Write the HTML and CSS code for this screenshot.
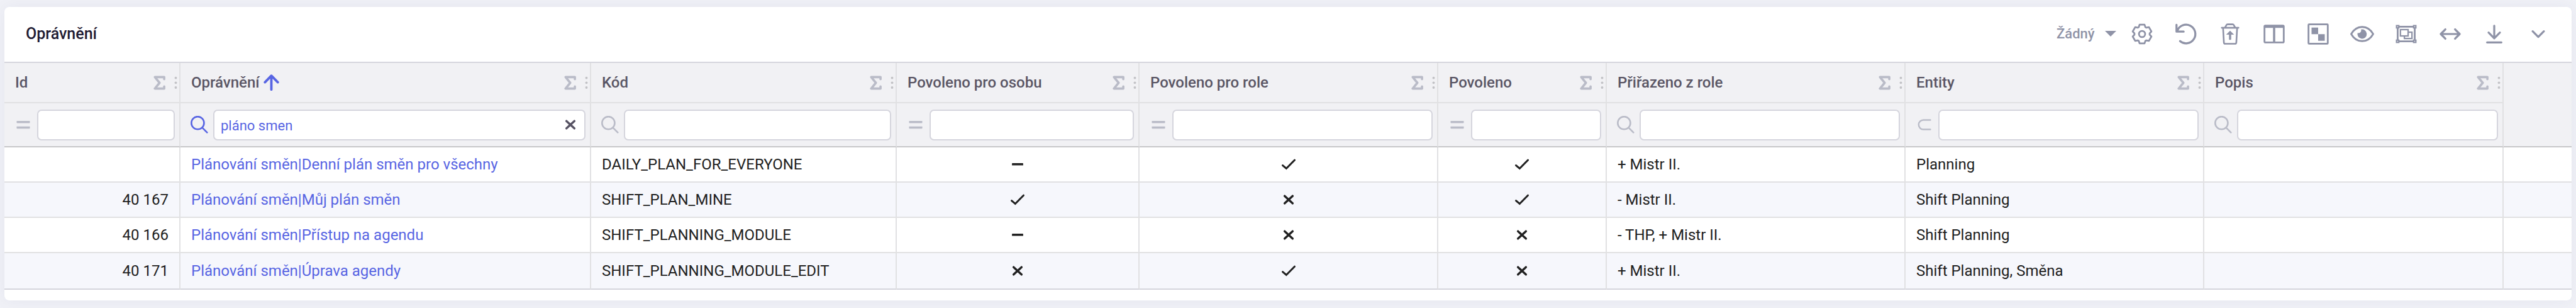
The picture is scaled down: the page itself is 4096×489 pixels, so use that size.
FILE: index.html
```html
<!DOCTYPE html>
<html lang="cs">
<head>
<meta charset="utf-8">
<meta name="viewport" content="width=device-width, initial-scale=1">
<title>Oprávnění</title>
<link rel="stylesheet" href="styles.css">
</head>
<body>
<svg class="sprite" aria-hidden="true">
  <symbol id="i-sigma" viewBox="-11 -13 22 26"><path d="M8.8 -6.8V-10.6H-8.4L0.2 0L-8.4 10.6H8.8V6.8" fill="none" stroke="currentColor" stroke-width="4.2" stroke-linecap="round" stroke-linejoin="round"/></symbol>
  <symbol id="i-dots" viewBox="0 0 6 26"><circle cx="3" cy="3.6" r="2.3"/><circle cx="3" cy="12.8" r="2.3"/><circle cx="3" cy="22" r="2.3"/></symbol>
  <symbol id="i-search" viewBox="0 0 32 32"><g fill="none" stroke="currentColor" stroke-width="3" stroke-linecap="round"><circle cx="13" cy="12.8" r="11.5"/><path d="M21.5 21.5L30 30.2"/></g></symbol>
  <symbol id="i-equals" viewBox="0 0 32 32"><rect x="4" y="9" width="24" height="4" rx="0.8"/><rect x="4" y="19" width="24" height="4" rx="0.8"/></symbol>
  <symbol id="i-subset" viewBox="0 0 32 32"><path d="M26.7 7.4H14A8.5 8.6 0 0 0 14 24.6H26.7" fill="none" stroke="currentColor" stroke-width="2.8" stroke-linecap="round"/></symbol>
  <symbol id="i-check" viewBox="-16 -16 32 32"><path d="M-10.8 1.8L-4.2 7.4L10.8 -7.8" fill="none" stroke="currentColor" stroke-width="3.4" stroke-linecap="round"/></symbol>
  <symbol id="i-cross" viewBox="-16 -16 32 32"><path d="M-7.2 -6.6L7.2 6.6M7.2 -6.6L-7.2 6.6" fill="none" stroke="currentColor" stroke-width="4" stroke-linecap="round"/></symbol>
  <symbol id="i-minus" viewBox="-16 -16 32 32"><rect x="-10.2" y="-2.2" width="20.4" height="4" rx="0.5"/></symbol>
</svg>

<main class="panel">
  <header class="panel-head">
    <h1 class="panel-title">Oprávnění</h1>
    <div class="toolbar">
      <div class="preset">
        <select class="preset-select" aria-label="Filtr"><option>Žádný</option></select>
        <svg class="preset-caret" viewBox="0 0 20 10" aria-hidden="true"><path d="M0 0H20L10 10Z"/></svg>
      </div>
      <button class="tool" type="button" aria-label="Nastavení"><svg class="tool-icon" viewBox="-40 -40 80 80"><g stroke-width="3.2"><circle r="5.6"/><path d="M-6 -12.6L-4.5 -17H4.5L6 -12.6L7.9 -11.5L12.5 -12.4L17 -4.6L13.8 -1.2V1.2L17 4.6L12.5 12.4L7.9 11.5L6 12.6L4.5 17H-4.5L-6 12.6L-7.9 11.5L-12.5 12.4L-17 4.6L-13.8 1.2V-1.2L-17 -4.6L-12.5 -12.4L-7.9 -11.5Z"/></g></svg></button>
      <button class="tool" type="button" aria-label="Obnovit"><svg class="tool-icon" viewBox="-40 -40 80 80"><path d="M-17.4 -16.8V-4.4H-4.4M-16 -5.5A16.9 16.9 0 1 1 -11 12.9"/></svg></button>
      <button class="tool" type="button" aria-label="Obnovit z koše"><svg class="tool-icon" viewBox="-40 -40 80 80"><g stroke-width="3"><path d="M-15.2 -11.3H15.2M-9 -12L-6.4 -16.6Q-6 -17.6 -4.6 -17.6H4.6Q6 -17.6 6.4 -16.6L9 -12M-12.8 -11L-11.3 15.2Q-11.1 17.7 -9 17.7H9Q11.1 17.7 11.3 15.2L12.8 -11"/></g><path class="solid" d="M0 -6L7.2 1.2H2V9.5Q2 10.5 1 10.5H-1Q-2 10.5 -2 9.5V1.2H-7.2Z"/></svg></button>
      <button class="tool" type="button" aria-label="Sloupce"><svg class="tool-icon" viewBox="-40 -40 80 80"><rect x="-17.5" y="-15.2" width="35" height="30.4" rx="1.6" stroke-width="3.2"/><path d="M-17 -13.2H17M0 -12V15" stroke-width="4" stroke-linecap="butt"/></svg></button>
      <button class="tool" type="button" aria-label="Seskupení"><svg class="tool-icon" viewBox="-40 -40 80 80"><rect x="-17.5" y="-17.5" width="35" height="35" rx="1" stroke-width="3.2"/><path class="solid" d="M-12 -11.6H0V0.2H12V12.2H0V0.2H-12Z"/></svg></button>
      <button class="tool" type="button" aria-label="Zobrazení"><svg class="tool-icon" viewBox="-40 -40 80 80"><path d="M-20 0C-15.5 -8 -8 -12.9 0 -12.9S15.5 -8 20 0C15.5 8 8 12.9 0 12.9S-15.5 8 -20 0Z" stroke-width="3.3"/><path class="solid" d="M-2.2 -8.2A8.5 8.5 0 1 1 -8.3 -2.3C-4.6 0 -0.5 -4.5 -2.2 -8.2Z"/></svg></button>
      <button class="tool" type="button" aria-label="Výběr"><svg class="tool-icon" viewBox="-40 -40 80 80"><g stroke-width="2.6" stroke-linejoin="miter"><rect x="-17.5" y="-15.2" width="4" height="4"/><rect x="13.5" y="-15.2" width="4" height="4"/><rect x="-17.5" y="11.2" width="4" height="4"/><rect x="13.5" y="11.2" width="4" height="4"/><path d="M-12.2 -13.2H12.2M-12.2 13.2H12.2M-15.5 -10V10M15.5 -10V10" stroke-width="3.2"/><rect x="-10.5" y="-8" width="14" height="11.5"/><path d="M4 -3.2H10.5V8.2H-3.3V4"/></g></svg></button>
      <button class="tool" type="button" aria-label="Šířka sloupců"><svg class="tool-icon" viewBox="-40 -40 80 80"><path d="M-17 0H17M-8.8 -8.5L-17.2 0L-8.8 8.5M8.8 -8.5L17.2 0L8.8 8.5"/></svg></button>
      <button class="tool" type="button" aria-label="Stáhnout"><svg class="tool-icon" viewBox="-40 -40 80 80"><path d="M0 -15V7.5M-10.3 -2.6L0 7.8L10.3 -2.6M-13 15.2H13"/></svg></button>
      <button class="tool" type="button" aria-label="Sbalit"><svg class="tool-icon" viewBox="-40 -40 80 80"><path d="M-10.2 -5L0 5.2L10.2 -5"/></svg></button>
    </div>
  </header>

  <table class="grid">
    <colgroup>
      <col class="c-id"><col class="c-name"><col class="c-code"><col class="c-person"><col class="c-role"><col class="c-allowed"><col class="c-from"><col class="c-entity"><col class="c-note"><col>
    </colgroup>
    <thead>
      <tr class="heads">
        <th scope="col"><div class="head"><span id="h-id">Id</span><button class="sum" type="button" aria-label="Součet"><svg><use href="#i-sigma"/></svg></button><svg class="dots"><use href="#i-dots"/></svg></div></th>
        <th scope="col" aria-sort="ascending"><div class="head"><span id="h-name">Oprávnění</span><svg class="sort" viewBox="0 0 28 30"><path d="M14 28V3M2.2 14.5L14 2.5L25.8 14.5"/></svg><button class="sum" type="button" aria-label="Součet"><svg><use href="#i-sigma"/></svg></button><svg class="dots"><use href="#i-dots"/></svg></div></th>
        <th scope="col"><div class="head"><span id="h-code">Kód</span><button class="sum" type="button" aria-label="Součet"><svg><use href="#i-sigma"/></svg></button><svg class="dots"><use href="#i-dots"/></svg></div></th>
        <th scope="col"><div class="head"><span id="h-person">Povoleno pro osobu</span><button class="sum" type="button" aria-label="Součet"><svg><use href="#i-sigma"/></svg></button><svg class="dots"><use href="#i-dots"/></svg></div></th>
        <th scope="col"><div class="head"><span id="h-role">Povoleno pro role</span><button class="sum" type="button" aria-label="Součet"><svg><use href="#i-sigma"/></svg></button><svg class="dots"><use href="#i-dots"/></svg></div></th>
        <th scope="col"><div class="head"><span id="h-allowed">Povoleno</span><button class="sum" type="button" aria-label="Součet"><svg><use href="#i-sigma"/></svg></button><svg class="dots"><use href="#i-dots"/></svg></div></th>
        <th scope="col"><div class="head"><span id="h-from">Přiřazeno z role</span><button class="sum" type="button" aria-label="Součet"><svg><use href="#i-sigma"/></svg></button><svg class="dots"><use href="#i-dots"/></svg></div></th>
        <th scope="col"><div class="head"><span id="h-entity">Entity</span><button class="sum" type="button" aria-label="Součet"><svg><use href="#i-sigma"/></svg></button><svg class="dots"><use href="#i-dots"/></svg></div></th>
        <th scope="col"><div class="head"><span id="h-note">Popis</span><button class="sum" type="button" aria-label="Součet"><svg><use href="#i-sigma"/></svg></button><svg class="dots"><use href="#i-dots"/></svg></div></th>
        <td class="rest" rowspan="2"></td>
      </tr>
      <tr class="filters">
        <td><div class="filter"><svg class="op"><use href="#i-equals"/></svg><input class="box" type="text" aria-labelledby="h-id"></div></td>
        <td><div class="filter active"><svg class="op"><use href="#i-search"/></svg><input class="box" type="text" value="pláno smen" aria-labelledby="h-name"><button class="clear" type="button" aria-label="Vymazat"><svg class="mark"><use href="#i-cross"/></svg></button></div></td>
        <td><div class="filter"><svg class="op"><use href="#i-search"/></svg><input class="box" type="text" aria-labelledby="h-code"></div></td>
        <td><div class="filter"><svg class="op"><use href="#i-equals"/></svg><input class="box" type="text" aria-labelledby="h-person"></div></td>
        <td><div class="filter"><svg class="op"><use href="#i-equals"/></svg><input class="box" type="text" aria-labelledby="h-role"></div></td>
        <td><div class="filter"><svg class="op"><use href="#i-equals"/></svg><input class="box" type="text" aria-labelledby="h-allowed"></div></td>
        <td><div class="filter"><svg class="op"><use href="#i-search"/></svg><input class="box" type="text" aria-labelledby="h-from"></div></td>
        <td><div class="filter"><svg class="op"><use href="#i-subset"/></svg><input class="box" type="text" aria-labelledby="h-entity"></div></td>
        <td><div class="filter"><svg class="op"><use href="#i-search"/></svg><input class="box" type="text" aria-labelledby="h-note"></div></td>
      </tr>
    </thead>
    <tbody>
      <tr>
        <td class="num"></td>
        <td><a class="link" href="#">Plánování směn|Denní plán směn pro všechny</a></td>
        <td>DAILY_PLAN_FOR_EVERYONE</td>
        <td class="flag"><svg class="mark" role="img" aria-label="Neurčeno"><use href="#i-minus"/></svg></td>
        <td class="flag"><svg class="mark" role="img" aria-label="Ano"><use href="#i-check"/></svg></td>
        <td class="flag"><svg class="mark" role="img" aria-label="Ano"><use href="#i-check"/></svg></td>
        <td>+ Mistr II.</td>
        <td>Planning</td>
        <td></td>
        <td></td>
      </tr>
      <tr>
        <td class="num">40 167</td>
        <td><a class="link" href="#">Plánování směn|Můj plán směn</a></td>
        <td>SHIFT_PLAN_MINE</td>
        <td class="flag"><svg class="mark" role="img" aria-label="Ano"><use href="#i-check"/></svg></td>
        <td class="flag"><svg class="mark" role="img" aria-label="Ne"><use href="#i-cross"/></svg></td>
        <td class="flag"><svg class="mark" role="img" aria-label="Ano"><use href="#i-check"/></svg></td>
        <td>- Mistr II.</td>
        <td>Shift Planning</td>
        <td></td>
        <td></td>
      </tr>
      <tr>
        <td class="num">40 166</td>
        <td><a class="link" href="#">Plánování směn|Přístup na agendu</a></td>
        <td>SHIFT_PLANNING_MODULE</td>
        <td class="flag"><svg class="mark" role="img" aria-label="Neurčeno"><use href="#i-minus"/></svg></td>
        <td class="flag"><svg class="mark" role="img" aria-label="Ne"><use href="#i-cross"/></svg></td>
        <td class="flag"><svg class="mark" role="img" aria-label="Ne"><use href="#i-cross"/></svg></td>
        <td>- THP, + Mistr II.</td>
        <td>Shift Planning</td>
        <td></td>
        <td></td>
      </tr>
      <tr>
        <td class="num">40 171</td>
        <td><a class="link" href="#">Plánování směn|Úprava agendy</a></td>
        <td>SHIFT_PLANNING_MODULE_EDIT</td>
        <td class="flag"><svg class="mark" role="img" aria-label="Ne"><use href="#i-cross"/></svg></td>
        <td class="flag"><svg class="mark" role="img" aria-label="Ano"><use href="#i-check"/></svg></td>
        <td class="flag"><svg class="mark" role="img" aria-label="Ne"><use href="#i-cross"/></svg></td>
        <td>+ Mistr II.</td>
        <td>Shift Planning, Směna</td>
        <td></td>
        <td></td>
      </tr>
    </tbody>
  </table>
</main>
</body>
</html>
```

FILE: styles.css
```css
* {
  box-sizing: border-box;
}

body {
  margin: 0;
  padding: 11px 7px 12px;
  background: #f0f1f7;
  color: #212121;
  font-family: Roboto, "Liberation Sans", sans-serif;
  font-size: 24px;
  line-height: 28px;
}

button,
input,
select {
  font: inherit;
  color: inherit;
}

button {
  padding: 0;
  border: 0;
  background: none;
}

svg {
  display: block;
  fill: currentColor;
}

.sprite {
  display: none;
}

.panel {
  padding-bottom: 17px;
  border-radius: 8px;
  background: #fff;
  box-shadow: 0 0 26px rgba(40, 45, 75, 0.05);
}

/* Title bar */
.panel-head {
  display: flex;
  align-items: center;
  justify-content: space-between;
  height: 89px;
  padding: 0 18px 2px 34px;
  border-bottom: 2px solid #d5d5dd;
}

.panel-title {
  margin: 0;
  color: #1f1b33;
  font-size: 25px;
  font-weight: 500;
}

.toolbar {
  display: flex;
  align-items: center;
  color: #8f93a7;
}

.preset {
  display: flex;
  align-items: center;
  gap: 16px;
  margin-right: 6px;
  font-size: 22px;
  font-weight: 500;
}

.preset-select {
  padding: 0;
  border: 0;
  background: none;
  appearance: none;
}

.preset-caret {
  width: 18px;
  height: 9px;
}

.tool-icon {
  width: 70px;
  height: 70px;
  fill: none;
  stroke: currentColor;
  stroke-width: 3.7;
  stroke-linecap: round;
  stroke-linejoin: round;
}

.tool-icon .solid {
  fill: currentColor;
  stroke: none;
}

/* Data grid */
.grid {
  width: 100%;
  table-layout: fixed;
  border-collapse: separate;
  border-spacing: 0;
}

.c-id { width: 280px; }
.c-name { width: 653px; }
.c-code { width: 486px; }
.c-person { width: 386px; }
.c-role { width: 475px; }
.c-allowed { width: 268px; }
.c-from { width: 475px; }
.c-entity { width: 475px; }
.c-note { width: 476px; }

.grid th,
.grid td {
  padding: 0;
  border-right: 2px solid #e1e1e3;
  border-bottom: 2px solid #e1e1e3;
  text-align: left;
  white-space: nowrap;
}

.grid tbody td:last-child,
.grid .rest {
  border-right: 0;
}

.grid thead {
  background: #f1f1f4;
}

.grid .heads th {
  height: 64px;
  color: #5a5665;
  font-weight: 500;
}

.grid .filters td {
  height: 70px;
}

.grid .filters td,
.grid .rest {
  border-bottom-color: #c7c7c9;
}

.head {
  display: flex;
  align-items: center;
  padding: 0 3px 0 17px;
}

.sort {
  width: 25px;
  height: 26px;
  margin-left: 6px;
  fill: none;
  stroke: #5865e3;
  stroke-width: 4.4;
  stroke-linecap: round;
  stroke-linejoin: round;
}

.sum {
  margin-left: auto;
  color: #babcc8;
}

.sum svg {
  width: 19px;
  height: 23px;
}

.dots {
  width: 5px;
  height: 23px;
  margin-left: 14px;
  color: #c2c2c6;
}

.filter {
  position: relative;
  display: flex;
  align-items: center;
  gap: 8px;
  padding: 0 7px 0 16px;
  color: #babcc8;
}

.op {
  flex: none;
  width: 28px;
  height: 28px;
}

.box {
  flex: 1;
  min-width: 0;
  height: 49px;
  padding: 2px 10px 0;
  border: 2px solid #d5d5dd;
  border-radius: 7px;
  background: #fff;
  font-size: 22px;
}

.active {
  color: #5865e3;
}

.active .box {
  padding-right: 48px;
}

.clear {
  position: absolute;
  right: 17px;
  color: #565263;
}

.mark {
  width: 28px;
  height: 28px;
}

.grid tbody td {
  height: 56px;
  padding: 0 17px;
}

.grid tbody tr:nth-child(even) {
  background: #f6f7fc;
}

.grid tbody tr:last-child td {
  height: 58px;
  border-bottom-color: #d5d5dd;
}

.grid .num {
  text-align: right;
}

.flag .mark {
  margin: 0 auto;
}

.link {
  color: #5865e3;
  text-decoration: none;
}
```
